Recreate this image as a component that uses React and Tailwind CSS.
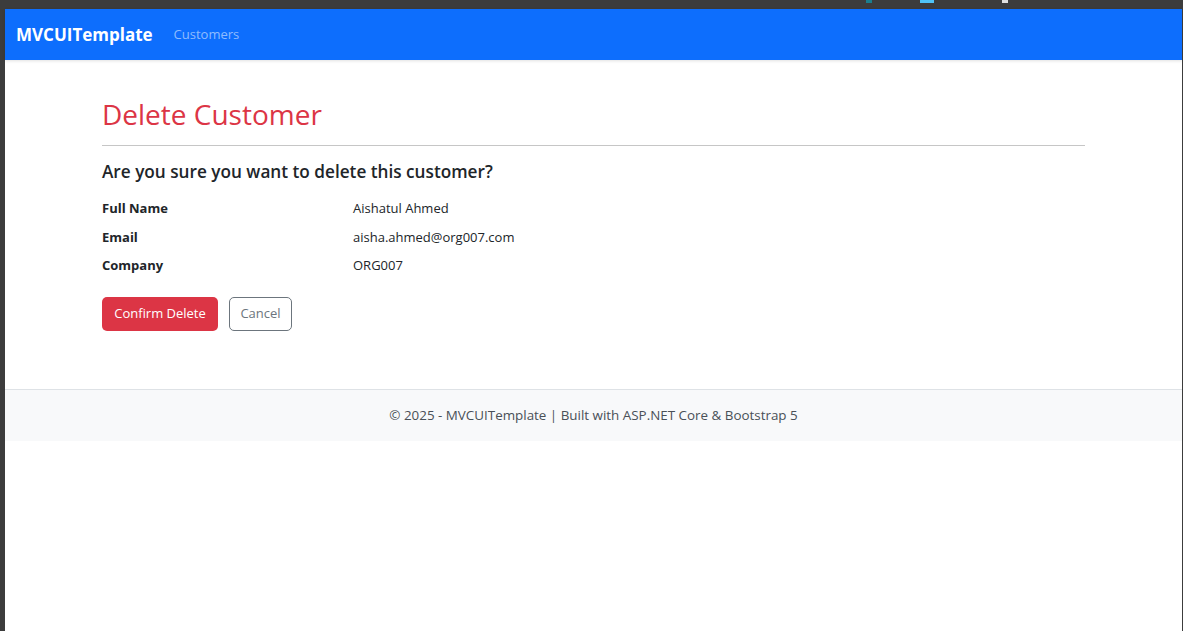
export default function App() {
  const font = { fontFamily: '"Open Sans", "Noto Sans", Arial, sans-serif' };
  return (
    <div className="flex h-[631px] w-full flex-col bg-[#3c3c3c]" style={font}>
      <div className="flex h-[9px] items-start">
        <div className="ml-[866px] h-[3px] w-[6px] bg-[#1a7f8f]" />
        <div className="ml-[48px] h-[3px] w-[14px] bg-[#4fc3f7]" />
        <div className="ml-[68px] h-[3px] w-[6px] bg-[#e0e0e0]" />
      </div>
      <div className="ml-[5px] mr-[1px] flex flex-1 flex-col bg-white">
        <nav className="flex h-[51px] items-center bg-[#0d6efd] pl-[11px] shadow-[0_1px_3px_rgba(0,0,0,0.12)]">
          <span className="text-[17px] font-bold leading-none text-white">MVCUITemplate</span>
          <span className="ml-[21px] text-[13px] leading-none text-[rgba(255,255,255,0.55)]">Customers</span>
        </nav>
        <main className="px-[97px] pt-[36px] pb-[58px]">
          <h2 className="text-[28px] leading-[36px] text-[#dc3545]">Delete Customer</h2>
          <hr className="mt-[13px] border-t border-[#c6c6c6]" />
          <h4 className="mt-[14px] text-[17.2px] font-semibold leading-[24px] text-[#212529]">
            Are you sure you want to delete this customer?
          </h4>
          <dl className="mt-[14px] grid grid-cols-[251px_1fr] gap-y-[7.5px] text-[13px] leading-[21px] text-[#212529]">
            <dt className="font-bold">Full Name</dt>
            <dd>Aishatul Ahmed</dd>
            <dt className="font-bold">Email</dt>
            <dd>aisha.ahmed@org007.com</dd>
            <dt className="font-bold">Company</dt>
            <dd>ORG007</dd>
          </dl>
          <div className="mt-[21px] flex gap-[11px]">
            <button className="h-[34px] w-[116px] rounded-[5px] bg-[#dc3545] text-[13px] text-white">
              Confirm Delete
            </button>
            <button className="h-[34px] w-[63px] rounded-[5px] border border-[#6c757d] bg-white text-[13px] text-[#6c757d]">
              Cancel
            </button>
          </div>
        </main>
        <footer className="flex h-[52px] items-center justify-center border-t border-[#dee2e6] bg-[#f8f9fa] text-[13.4px] text-[#495057]">
          © 2025 - MVCUITemplate | Built with ASP.NET Core &amp; Bootstrap 5
        </footer>
      </div>
    </div>
  );
}
